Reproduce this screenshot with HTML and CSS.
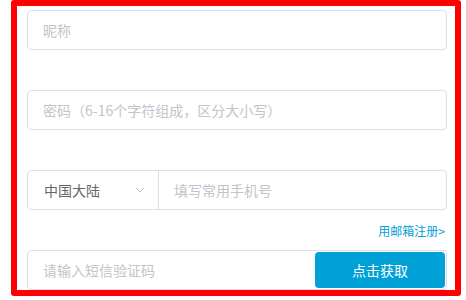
FILE: index.html
```html
<!DOCTYPE html>
<html lang="zh-CN">
<head>
<meta charset="utf-8">
<title>注册</title>
<link rel="stylesheet" href="styles.css">
</head>
<body>
<div class="frame">
  <form class="form">
    <div class="field"><span class="ph">昵称</span></div>
    <div class="field"><span class="ph">密码（6-16个字符组成，区分大小写）</span></div>
    <div class="field phone">
      <div class="country">
        <span class="country-name">中国大陆</span>
        <svg class="chev" width="10" height="6" viewBox="0 0 10 6"><path d="M1 1 L5 5 L9 1" fill="none" stroke="#c0c4cc" stroke-width="1"/></svg>
      </div>
      <span class="ph num">填写常用手机号</span>
    </div>
    <div class="link-row"><a class="mail-link" href="#">用邮箱注册&gt;</a></div>
    <div class="field code">
      <span class="ph">请输入短信验证码</span>
      <button type="button" class="get-btn">点击获取</button>
    </div>
  </form>
</div>
</body>
</html>
```
FILE: styles.css
```css
html, body {
  margin: 0;
  padding: 0;
  background: #fff;
}
body {
  font-family: "Noto Sans CJK SC", "Noto Sans", "Liberation Sans", sans-serif;
  font-size: 14px;
}
.frame {
  box-sizing: border-box;
  margin-left: 11px;
  width: 450px;
  height: 296px;
  border: 6px solid #ff0000;
  border-radius: 3px;
  padding: 4px 8px 0 10px;
  overflow: hidden;
}
.form {
  display: flex;
  flex-direction: column;
  gap: 40px;
}
.field {
  box-sizing: border-box;
  height: 40px;
  width: 420px;
  border: 1px solid #dcdfe6;
  border-radius: 4px;
  display: flex;
  align-items: center;
  padding-left: 15px;
}
.ph {
  color: #c0c4cc;
  line-height: 20px;
}
.phone {
  padding-left: 0;
}
.country {
  box-sizing: border-box;
  width: 131px;
  height: 100%;
  display: flex;
  align-items: center;
  justify-content: space-between;
  padding: 0 13px 0 16px;
  border-right: 1px solid #dcdfe6;
  color: #666;
}
.chev {
  display: block;
}
.num {
  margin-left: 15px;
}
.link-row {
  box-sizing: border-box;
  height: 40px;
  margin: -40px 0;
  width: 420px;
  padding-right: 2px;
  display: flex;
  align-items: center;
  justify-content: flex-end;
}
.mail-link {
  font-size: 12px;
  color: #00a1d6;
  text-decoration: none;
}
.code {
  justify-content: space-between;
  padding-right: 1px;
}
.get-btn {
  width: 130px;
  height: 36px;
  border: none;
  border-radius: 4px;
  background: #00a1d6;
  color: #fff;
  font-family: inherit;
  font-size: 14px;
  padding: 0;
}
```
